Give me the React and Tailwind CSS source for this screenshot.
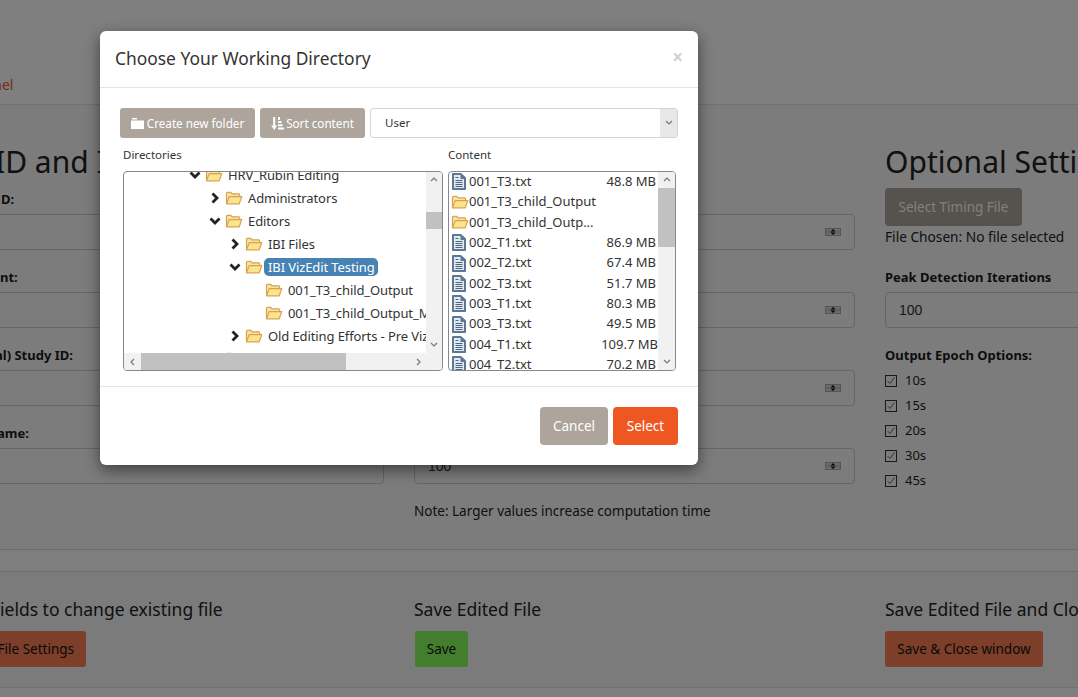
const FONT = "[font-family:'Noto_Sans','Open_Sans',sans-serif]";
const INPUT_FONT = "[font-family:'Liberation_Sans',sans-serif]";

function Folder({ className = "" }) {
  return (
    <svg width="18" height="14" viewBox="0 0 18 14" className={"shrink-0 " + className}>
      <path d="M1.5 12.5V2.2c0-.5.4-.9.9-.9h3.4l1.3 1.5h6.6c.5 0 .9.4.9.9v1.6" fill="#f6e3a8" stroke="#d9a24e" strokeWidth="1.2" />
      <path d="M1.5 12.8 4.2 5.6h12.6l-2.6 7.2z" fill="#fbe48e" stroke="#d9a24e" strokeWidth="1.2" strokeLinejoin="round" />
    </svg>
  );
}

function Doc() {
  return (
    <svg width="14" height="17" viewBox="0 0 14 17" className="shrink-0 -ml-[3px]">
      <path d="M0 1c0-.5.3-1 1-1h8l5 4.500V16c0 .6-.4 1-1 1H1c-.7 0-1-.4-1-1z" fill="#5b7896" />
      <path d="M2 2H8.500V6H12V15H2z" fill="#e4e9ee" />
      <path d="M3.500 4.500h3M3.500 7.500h7M3.500 9.500h7M3.500 11.500h7M3.500 13.500h7" stroke="#4a6684" strokeWidth="1.100" />
    </svg>
  );
}

function Chev({ open }) {
  return (
    <svg width="12" height="12" viewBox="0 0 12 12" className="shrink-0 -ml-[1px]">
      {open ? (
        <path d="M1.500 3.500 6 8l4.500-4.500" fill="none" stroke="#222" strokeWidth="2.800" />
      ) : (
        <path d="M3.500 1.500 8 6l-4.500 4.500" fill="none" stroke="#222" strokeWidth="2.800" />
      )}
    </svg>
  );
}

function Arrow({ dir }) {
  const d = { up: "M1 5 4 2l3 3", down: "M1 2l3 3 3-3", left: "M5 1 2 4l3 3", right: "M2 1l3 3-3 3" }[dir];
  return (
    <svg width="8" height="8" viewBox="0 0 8 8">
      <path d={d} fill="none" stroke="#777" strokeWidth="1.200" />
    </svg>
  );
}

function TreeRow({ pad, chev, text, selected }) {
  return (
    <div className={"flex items-center h-[23px] whitespace-nowrap text-[13px] text-[#333] " + pad}>
      <span className="w-[20px] shrink-0 flex justify-center">{chev && <Chev open={chev === "open"} />}</span>
      <Folder />
      <span className={"ml-[1px] pl-[4px] pr-[3px] h-[18px] leading-[18px] rounded-[5px] tracking-[-0.1px] " + (selected ? "bg-[#4682b4] text-white" : "")}>{text}</span>
    </div>
  );
}

function FileRow({ name, size, folder, wide }) {
  return (
    <div className="flex items-center h-[20.35px] whitespace-nowrap text-[13px] text-[#333] pl-[2px]">
      <span className="w-[18px] flex justify-center shrink-0">{folder ? <Folder /> : <Doc />}</span>
      <span className="flex-1">{name}</span>
      <span className={wide ? "mr-0" : "mr-[2px]"}>{size}</span>
    </div>
  );
}

function Spinner() {
  return (
    <svg width="16" height="8" viewBox="0 0 16 8" className="shrink-0">
      <rect x="0.500" y="0.500" width="15" height="7" fill="#d6d6d6" stroke="#aaa" />
      <path d="M0 4h16" stroke="#aaa" />
      <path d="M5.500 3.400 8 1l2.500 2.400zM5.500 4.600 8 7l2.500-2.400z" fill="#111" />
    </svg>
  );
}

function LeftField({ label, pad }) {
  return (
    <div className="h-[78px]">
      <div className={"h-[25px] text-[13px] font-bold leading-[20px] text-[#1a1a1a] whitespace-nowrap " + pad}>{label}</div>
      <div className="h-[36px] rounded-[4px] border border-[#ccc]" />
    </div>
  );
}

function MidField() {
  return (
    <div className="h-[78px]">
      <div className="h-[36px] rounded-[4px] border border-[#ccc] flex items-center justify-end pr-[13px]">
        <Spinner />
      </div>
    </div>
  );
}

function Check({ label }) {
  return (
    <div className="flex items-center h-[25px] text-[13px] text-[#1e1e1e]">
      <span className="w-[12px] h-[12px] border border-[#333] flex items-center justify-center">
        <svg width="10" height="10" viewBox="0 0 10 10"><path d="M1.500 5 4 7.500 8.500 1.500" fill="none" stroke="#666" strokeWidth="1" /></svg>
      </span>
      <span className="ml-[8px]">{label}</span>
    </div>
  );
}

export default function App() {
  return (
    <div className={"relative w-[1078px] h-[697px] overflow-hidden bg-white " + FONT}>
      {/* Underlying page */}
      <div className="h-[105px] border-b border-[#e3e3e3] flex items-end pb-[9px]">
        <span className="text-[14px] leading-[20px] text-[#ef5722] -ml-[23px]">Panel</span>
      </div>
      <div className="w-[1383px] -ml-[57px] grid grid-cols-3 gap-x-[30px] h-[445px] pt-[37px] border-b border-[#dcdcdc] bg-[#f8f8f8]">
        <div>
          <h2 className="text-[30px] leading-[40px] h-[47px] pl-[52px] text-[#222] whitespace-nowrap">ID and Information</h2>
          <LeftField label="D:" pad="pl-[58px]" />
          <LeftField label="nt:" pad="pl-[57px]" />
          <LeftField label="al) Study ID:" pad="pl-[52px]" />
          <LeftField label="ame:" pad="pl-[54px]" />
        </div>
        <div>
          <div className="h-[72px]" />
          <MidField />
          <MidField />
          <MidField />
          <div className={"h-[36px] rounded-[4px] border border-[#ccc] flex items-center justify-between pl-[13px] pr-[13px] text-[14px] text-[#333] " + INPUT_FONT}><span>100</span><Spinner /></div>
          <div className="mt-[17px] text-[13.500px] leading-[20px] text-[#222]">Note: Larger values increase computation time</div>
        </div>
        <div>
          <h2 className="text-[30px] leading-[40px] h-[46px] text-[#222] whitespace-nowrap">Optional Settings</h2>
          <button className="h-[38px] w-[137px] rounded-[4px] bg-[#ada59c] text-white text-[13.500px] block whitespace-nowrap">Select Timing File</button>
          <div className="h-[20px] mt-[1px] text-[13.700px] leading-[20px] text-[#222] whitespace-nowrap">File Chosen: No file selected</div>
          <div className="h-[25px] mt-[20px] text-[13px] font-bold leading-[20px] text-[#1a1a1a]">Peak Detection Iterations</div>
          <div className={"h-[36px] rounded-[4px] border border-[#ccc] flex items-center pl-[13px] text-[14px] text-[#333] " + INPUT_FONT}>100</div>
          <div className="h-[20px] mt-[17px] text-[13px] font-bold leading-[20px] text-[#1a1a1a]">Output Epoch Options:</div>
          <div className="mt-[3px]">
            <Check label="10s" />
            <Check label="15s" />
            <Check label="20s" />
            <Check label="30s" />
            <Check label="45s" />
          </div>
        </div>
      </div>
      <div className="h-[22px] border-b border-[#dcdcdc] bg-[#fcfcfc]" />
      <div className="w-[1383px] -ml-[57px] grid grid-cols-3 gap-x-[30px] h-[116px] pt-[26px] border-b border-[#e0e0e0] bg-[#f6f6f6]">
        <div>
          <div className="text-[17.500px] leading-[22px] h-[33px] text-[#222] whitespace-nowrap pl-[57px]">ields to change existing file</div>
          <button className="h-[36px] w-[143px] rounded-[3px] bg-[#fb7e54] text-[#111] text-[13.500px] text-right pr-[12px] block whitespace-nowrap">File Settings</button>
        </div>
        <div>
          <div className="text-[17.500px] leading-[22px] h-[33px] text-[#222]">Save Edited File</div>
          <button className="h-[36px] w-[53px] ml-[1px] rounded-[3px] bg-[#86fa5c] text-[#111] text-[13.500px] block">Save</button>
        </div>
        <div>
          <div className="text-[17.500px] leading-[22px] h-[33px] text-[#222] whitespace-nowrap">Save Edited File and Close</div>
          <button className="h-[36px] w-[158px] rounded-[3px] bg-[#fb7e54] text-[#111] text-[13.500px] block whitespace-nowrap">Save &amp; Close window</button>
        </div>
      </div>

      {/* Backdrop */}
      <div className="absolute inset-0 bg-black/50" />

      {/* Modal */}
      <div className="absolute left-[100px] top-[31px] w-[598px] h-[434px] bg-white rounded-[6px] shadow-[0_5px_15px_rgba(0,0,0,0.5)] flex flex-col">
        <div className="h-[57px] border-b border-[#e5e5e5] flex items-center justify-between pl-[15px] pr-[15px] shrink-0">
          <h4 className="text-[17.400px] text-[#333] -mt-[2px]">Choose Your Working Directory</h4>
          <span className="text-[19px] font-bold text-[#d0d0d0] leading-none -mt-[4px]">×</span>
        </div>
        <div className="h-[299px] shrink-0 pl-[20px] pr-[20px] pt-[20px] border-b border-[#e5e5e5]">
          <div className="flex gap-[5px] h-[30px]">
            <button className="w-[135px] h-[30px] pt-[1px] rounded-[3px] bg-[#ada59c] text-white text-[11.700px] flex items-center justify-center gap-[3px] whitespace-nowrap">
              <svg width="13" height="11" viewBox="0 0 13 11"><path d="M0 2.500h13V11H0zM1 0h5v1.500H1z" fill="#fff" /></svg>
              Create new folder
            </button>
            <button className="w-[105px] h-[30px] pt-[1px] rounded-[3px] bg-[#ada59c] text-white text-[11.700px] flex items-center justify-center gap-[2px] whitespace-nowrap">
              <svg width="13" height="13" viewBox="0 0 13 13"><path d="M2.200 0h2v8.500h2L3.200 13 .2 8.500h2zM7 0h2v3H7zM7 4h3.500v2H7zM7 7.300h4.500v2H7zM7 10.500h6v2H7z" fill="#fff" /></svg>
              Sort content
            </button>
            <div className="flex-1 h-[30px] rounded-[3px] border border-[#d4d4d4] flex overflow-hidden">
              <span className="flex-1 pl-[14px] text-[11.500px] leading-[28px] text-[#333]">User</span>
              <span className="w-[17px] bg-[#e8e8e8] flex items-center justify-center"><Arrow dir="down" /></span>
            </div>
          </div>
          <div className="flex mt-[8px] pl-[3px] h-[17px] text-[11.500px] leading-[17px] text-[#333]">
            <span className="w-[325px]">Directories</span>
            <span>Content</span>
          </div>
          <div className="flex mt-[8px] pl-[3px] h-[200px]">
            {/* Tree */}
            <div className="w-[320px] h-[200px] border border-[#888] rounded-[4px] overflow-hidden flex flex-col shrink-0">
              <div className="flex h-[181px]">
                <div className="w-[302px] overflow-hidden">
                  <div className="-mt-[9px]">
                    <TreeRow pad="pl-[61px]" chev="open" text="HRV_Rubin Editing" />
                    <TreeRow pad="pl-[81px]" chev="closed" text="Administrators" />
                    <TreeRow pad="pl-[81px]" chev="open" text="Editors" />
                    <TreeRow pad="pl-[101px]" chev="closed" text="IBI Files" />
                    <TreeRow pad="pl-[101px]" chev="open" text="IBI VizEdit Testing" selected />
                    <TreeRow pad="pl-[121px]" text="001_T3_child_Output" />
                    <TreeRow pad="pl-[121px]" text="001_T3_child_Output_Matlab" />
                    <TreeRow pad="pl-[101px]" chev="closed" text="Old Editing Efforts - Pre VizEdit" />
                    <TreeRow pad="pl-[81px]" text="" />
                  </div>
                </div>
                <div className="w-[16px] bg-[#f1f1f1] flex flex-col items-center">
                  <div className="h-[16px] flex items-center justify-center"><Arrow dir="up" /></div>
                  <div className="h-[17px] w-full mt-[24px] bg-[#c1c1c1]" />
                  <div className="flex-1" />
                  <div className="h-[16px] flex items-center justify-center"><Arrow dir="down" /></div>
                </div>
              </div>
              <div className="flex h-[17px] bg-[#f1f1f1]">
                <div className="w-[17px] flex items-center justify-center"><Arrow dir="left" /></div>
                <div className="w-[205px] bg-[#c1c1c1]" />
                <div className="w-[65px]" />
                <div className="w-[16px] flex items-center justify-center"><Arrow dir="right" /></div>
              </div>
            </div>
            {/* Content */}
            <div className="ml-[5px] w-[228px] h-[200px] border border-[#888] rounded-[4px] overflow-hidden flex">
              <div className="w-[209px] overflow-hidden">
                <div className="-mt-[0.500px]">
                  <FileRow name="001_T3.txt" size="48.8 MB" />
                  <FileRow name="001_T3_child_Output" folder />
                  <FileRow name="001_T3_child_Outp..." folder />
                  <FileRow name="002_T1.txt" size="86.9 MB" />
                  <FileRow name="002_T2.txt" size="67.4 MB" />
                  <FileRow name="002_T3.txt" size="51.7 MB" />
                  <FileRow name="003_T1.txt" size="80.3 MB" />
                  <FileRow name="003_T3.txt" size="49.5 MB" />
                  <FileRow name="004_T1.txt" size="109.7 MB" wide />
                  <FileRow name="004_T2.txt" size="70.2 MB" />
                </div>
              </div>
              <div className="w-[17px] bg-[#f1f1f1] flex flex-col">
                <div className="h-[16px] flex items-center justify-center"><Arrow dir="up" /></div>
                <div className="h-[59px] bg-[#c1c1c1]" />
                <div className="flex-1" />
                <div className="h-[16px] flex items-center justify-center"><Arrow dir="down" /></div>
              </div>
            </div>
          </div>
        </div>
        <div className="flex-1 flex items-start justify-end gap-[5px] pt-[20px] pr-[20px]">
          <button className="w-[68px] h-[38px] rounded-[4px] bg-[#ada59c] text-white text-[13.500px]">Cancel</button>
          <button className="w-[65px] h-[38px] rounded-[4px] bg-[#ef5722] text-white text-[13.500px]">Select</button>
        </div>
      </div>
    </div>
  );
}
